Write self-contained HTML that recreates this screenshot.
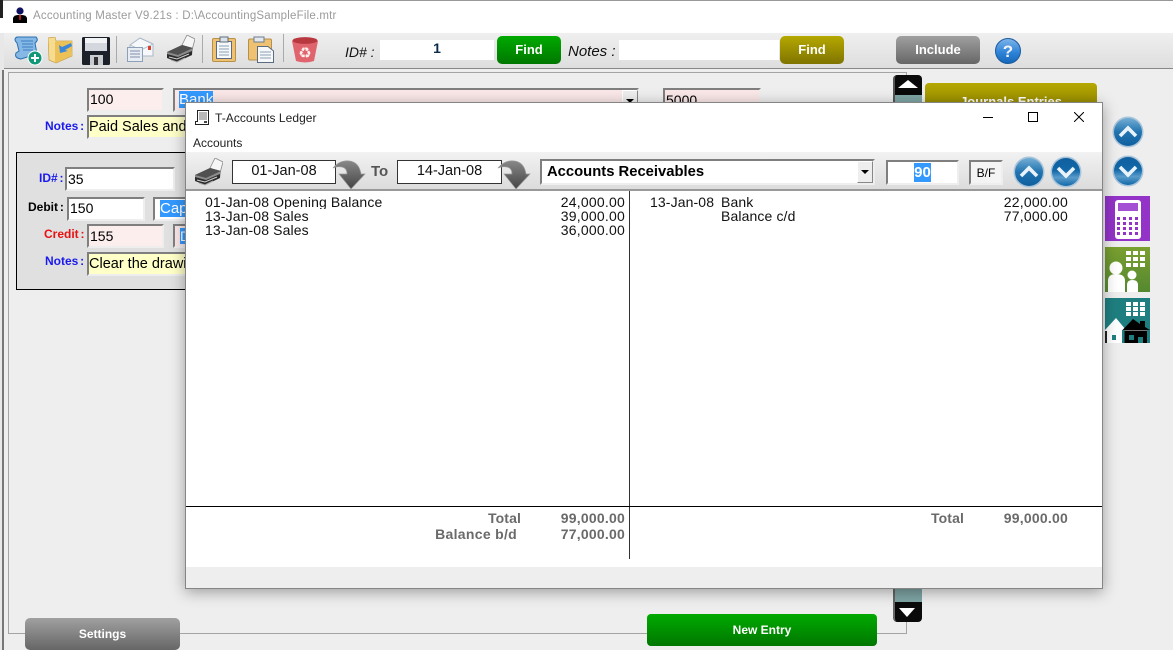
<!DOCTYPE html>
<html><head><meta charset="utf-8"><style>
*{box-sizing:border-box}
html,body{margin:0;padding:0;width:1173px;height:650px;overflow:hidden;background:#eee;font-family:"Liberation Sans",sans-serif}
.a{position:absolute}
.t{position:absolute;white-space:nowrap}
.inp{position:absolute;border-style:solid;border-width:2px;border-color:#7f7f7f #eee #eee #7f7f7f;font-size:14px;line-height:20px;padding-left:1px;overflow:hidden;white-space:nowrap;color:#000}
.lb{position:absolute;font-size:12px;font-weight:bold;white-space:nowrap;line-height:14px;word-spacing:-1.5px}
.hl{background:#3399ff;color:#fff}
.btn{position:absolute;border-radius:5px;color:#fff;font-weight:bold;font-size:12px;text-align:center}
.g{background:linear-gradient(#00aa00,#007700)}
.o{background:linear-gradient(#b5a800,#7f7400)}
.k{background:linear-gradient(#a0a0a0,#666)}
.dd{position:absolute;width:16px;background:#eee;border:1px solid;border-color:#fff #888 #888 #fff}
.dd:after{content:"";position:absolute;left:3px;top:8px;border:4px solid transparent;border-top:4px solid #000;border-bottom:0}
.r{position:absolute;font-size:14px;line-height:14px;height:14px;overflow:hidden;white-space:nowrap;color:#111;letter-spacing:.12px}
.n{letter-spacing:.22px}
.b{font-weight:bold;color:#6a6a6a}
.ra{text-align:right}
</style></head><body>
<svg width="0" height="0" style="position:absolute"><defs>
<linearGradient id="ug" x1="0" y1="0" x2="0" y2="1"><stop offset="0" stop-color="#74aed4"/><stop offset=".5" stop-color="#2274b0"/><stop offset="1" stop-color="#0f5f9f"/></linearGradient>
<linearGradient id="dg" x1="0" y1="0" x2="0" y2="1"><stop offset="0" stop-color="#0f5f9f"/><stop offset=".45" stop-color="#1268a8"/><stop offset=".7" stop-color="#5a9ccb"/><stop offset="1" stop-color="#1268a8"/></linearGradient>
<linearGradient id="ag" x1="0" y1="0" x2="0" y2="1"><stop offset="0" stop-color="#888"/><stop offset="1" stop-color="#444"/></linearGradient>
<symbol id="pr" viewBox="0 0 30 28">
<path d="M17 10 22 0 30 4 27 15z" fill="#f6f6f6" stroke="#8a8a8a" stroke-width=".8"/>
<path d="M2 17 17 10 28 13 27 20 12 27 2 22z" fill="#8c8c8c"/>
<path d="M2 17 17 10 28 13 13 20z" fill="#505050"/>
<path d="M2 19 13 22 27 16 27 20 12 27 2 23z" fill="#2c2c2c"/>
<path d="M4 22 12 24 24 19" stroke="#d0d0d0" fill="none"/>
<path d="M6 25 12 27 20 23" stroke="#aaa" fill="none"/>
</symbol>
<symbol id="upc" viewBox="0 0 32 32">
<circle cx="16" cy="16" r="15.5" fill="#a8c4da"/><circle cx="16" cy="16" r="14" fill="url(#ug)"/>
<path d="M8 20 16 12 24 20" stroke="#eaf3f9" stroke-width="3.6" fill="none"/>
</symbol>
<symbol id="dnc" viewBox="0 0 32 32">
<circle cx="16" cy="16" r="15.5" fill="#a8c4da"/><circle cx="16" cy="16" r="14" fill="url(#dg)"/>
<path d="M8 12 16 20 24 12" stroke="#eaf3f9" stroke-width="3.6" fill="none"/>
</symbol>
<symbol id="arr" viewBox="0 0 34 30">
<path d="M1 8Q8 0 17 1 27 2 29 14L33 14 19 29 7 14 15 14Q15 8 10 7 5 6 1 8z" fill="url(#ag)" stroke="#999" stroke-width=".7"/>
</symbol>
</defs></svg>

<!-- title bar -->
<div class="a" style="left:0;top:0;width:1173px;height:33px;background:#fff;border-top:1px solid #999"></div>
<div class="a" style="left:0;top:0;width:3px;height:18px;background:#222"></div>
<svg class="a" style="left:13px;top:7px" width="14" height="17" viewBox="0 0 14 17"><circle cx="7" cy="4" r="3.6" fill="#101060"/><path d="M0 16V11Q1 8 5 8H9Q13 8 14 11V16z" fill="#000"/><path d="M6 8H8L7.7 13H6.3z" fill="#d02020"/></svg>
<div class="t" style="left:33px;top:9px;font-size:11.5px;line-height:14px;color:#9b9b9b;letter-spacing:.2px">Accounting Master V9.21s : D:\AccountingSampleFile.mtr</div>

<!-- main toolbar -->
<div class="a" style="left:0;top:33px;width:4px;height:617px;background:#e8e8e8"></div>
<div class="a" style="left:2px;top:70px;width:1.5px;height:580px;background:#777"></div>
<div class="a" style="left:4px;top:33px;width:1169px;height:36px;background:linear-gradient(#efefef,#dedede);border-bottom:1px solid #888"></div>

<!-- scroll icon -->
<svg class="a" style="left:14px;top:36px" width="29" height="30" viewBox="0 0 29 30"><path d="M3 1H22Q25 4 21 7L23 18 7 23Q0 22 2 17L5 15 3 7Q-1 3 3 1z" fill="#86b8e6" stroke="#2a70b0"/><path d="M7 5H19M8 8H19M8 11H19M9 14H19" stroke="#3a80c0"/><circle cx="21" cy="22" r="7" fill="#109878" stroke="#fff"/><path d="M21 18V26M17 22H25" stroke="#fff" stroke-width="2"/></svg>
<!-- folder -->
<svg class="a" style="left:48px;top:37px" width="25" height="27" viewBox="0 0 25 27"><path d="M0 1 7 0 8 4 24 4V19L8 26 1 23z" fill="#f6dc90" stroke="#c8a048" stroke-width=".7"/><path d="M7 5 24 4 23 19 7 26z" fill="#ecc258"/><path d="M23 6 14 10 11 8 12 16 20 14 17 13 24 9z" fill="#3b88d8"/></svg>
<!-- floppy -->
<svg class="a" style="left:82px;top:37px" width="28" height="28" viewBox="0 0 28 28"><rect width="28" height="28" rx="1.5" fill="#1c2028"/><rect x="3" y="1" width="22" height="13" fill="#d4d8de"/><rect x="3" y="1" width="22" height="5" fill="#f2f4f6"/><rect x="8" y="18" width="13" height="10" fill="#c8ccd0"/><rect x="12" y="20" width="4" height="8" fill="#333"/></svg>
<div class="a" style="left:116px;top:36px;width:1px;height:27px;background:#aaa"></div>
<!-- mail -->
<svg class="a" style="left:127px;top:37px" width="27" height="25" viewBox="0 0 27 25"><path d="M3 8 13 1 26 7V19H3z" fill="#f6f8fb" stroke="#a8b8c8"/><path d="M3 8 14 13 26 7" fill="none" stroke="#b8c4d0"/><rect x="21" y="9" width="3" height="4" fill="#d84030"/><rect x="0.5" y="10.5" width="15" height="14" fill="#e8edf4" stroke="#8ca0b8"/><path d="M3 14H13M3 17H13M3 20H13" stroke="#8090a8"/></svg>
<svg class="a" style="left:165px;top:35px" width="30" height="28"><use href="#pr"/></svg>
<div class="a" style="left:202px;top:35px;width:1px;height:28px;background:#aaa"></div>
<!-- clipboard -->
<svg class="a" style="left:212px;top:36px" width="24" height="26" viewBox="0 0 24 26"><rect x=".5" y="2.5" width="23" height="23" rx="1.5" fill="#eec272" stroke="#b89048"/><rect x="4.5" y="5.5" width="15" height="17" fill="#f6f8fa" stroke="#5c6c80"/><rect x="8" y="1" width="8" height="5" fill="#dde2e8" stroke="#5c6c80"/><path d="M7 10H17M7 13H17M7 16H17M7 19H17" stroke="#8ca0b8"/></svg>
<!-- paste -->
<svg class="a" style="left:248px;top:36px" width="27" height="27" viewBox="0 0 27 27"><rect x=".5" y="3" width="23" height="21" rx="1.5" fill="#eec272" stroke="#b89048"/><rect x="6" y="1" width="10" height="5" fill="#e4e8ec" stroke="#6c7c90"/><path d="M9.5 10.5H20L25.5 15V26.5H9.5z" fill="#f6f8fa" stroke="#5c6c80"/><path d="M12 16H23M12 19H23M12 22H23" stroke="#8ca0b8"/></svg>
<div class="a" style="left:283px;top:34px;width:1px;height:28px;background:#aaa"></div>
<!-- recycle -->
<svg class="a" style="left:291px;top:36px" width="28" height="28" viewBox="0 0 28 28"><path d="M1 5Q14-1 27 5L23 25Q14 28 5 25z" fill="#e0646e"/><ellipse cx="14" cy="4.5" rx="12.5" ry="3.4" fill="#b83840"/><text x="14" y="22" font-family="DejaVu Sans" font-size="15" text-anchor="middle" fill="#fdeeee">♻</text></svg>

<div class="t" style="left:345px;top:44px;font-size:14px;line-height:16px;font-style:italic;color:#111">ID# :</div>
<div class="a" style="left:380px;top:40px;width:114px;height:20px;background:#fff;text-align:center;font-size:14px;font-weight:bold;line-height:17px;color:#0a2a4a">1</div>
<div class="btn g" style="left:497px;top:36px;width:64px;height:28px;line-height:28px;font-size:13px">Find</div>
<div class="t" style="left:568px;top:44px;font-size:15px;line-height:16px;font-style:italic;color:#111">Notes :</div>
<div class="a" style="left:619px;top:40px;width:160px;height:20px;background:#fff"></div>
<div class="btn o" style="left:780px;top:36px;width:64px;height:28px;line-height:28px;font-size:13px">Find</div>
<div class="btn k" style="left:896px;top:36px;width:84px;height:28px;line-height:28px;font-size:13px">Include</div>
<svg class="a" style="left:995px;top:38px" width="26" height="26" viewBox="0 0 26 26"><defs><linearGradient id="hg" x1="0" y1="0" x2="0" y2="1"><stop offset="0" stop-color="#80b4ea"/><stop offset=".55" stop-color="#2f84d8"/><stop offset="1" stop-color="#1566b8"/></linearGradient></defs><circle cx="13" cy="13" r="12.5" fill="url(#hg)" stroke="#1a5a9c"/><text x="13" y="19" font-family="Liberation Sans" font-weight="bold" font-size="17" text-anchor="middle" fill="#f2f4fa">?</text></svg>

<!-- background panel -->
<div class="a" style="left:8px;top:72px;width:899px;height:562px;border:1px solid #a4a4a4;background:#eee"></div>

<div class="inp" style="left:87px;top:88px;width:77px;height:24px;background:#fdeeee;line-height:19px">100</div>
<div class="inp" style="left:173px;top:88px;width:466px;height:24px;background:#fbe8e8;padding-left:4px;font-size:15px"><span class="hl">Bank</span></div>
<div class="dd" style="left:622px;top:90px;height:20px"></div>
<div class="inp" style="left:663px;top:88px;width:98px;height:24px;background:#fbe8e8">5000</div>
<div class="lb" style="left:45px;top:119px;color:#1a1aee">Notes :</div>
<div class="inp" style="left:87px;top:115px;width:300px;height:24px;background:#ffffc8;font-size:14.5px;padding-left:0">Paid Sales and</div>

<div class="a" style="left:16px;top:152px;width:300px;height:138px;border:1px solid #000;background:#e0e0e0"></div>
<div class="lb" style="left:39px;top:171px;color:#1a1aee">ID# :</div>
<div class="inp" style="left:65px;top:167px;width:110px;height:24px;background:#fff">35</div>
<div class="lb" style="left:28px;top:200px;color:#000">Debit :</div>
<div class="inp" style="left:67px;top:197px;width:78px;height:24px;background:#fff;line-height:19px">150</div>
<div class="inp" style="left:153px;top:197px;width:100px;height:24px;background:#fff;padding-left:5px;font-size:15px"><span class="hl">Cap</span></div>
<div class="lb" style="left:44px;top:227px;color:#e81010">Credit :</div>
<div class="inp" style="left:87px;top:224px;width:77px;height:24px;background:#fdeeee">155</div>
<div class="inp" style="left:173px;top:224px;width:60px;height:24px;background:#fbe8e8;padding-left:5px"><span class="hl">D</span></div>
<div class="lb" style="left:45px;top:254px;color:#1a1aee">Notes :</div>
<div class="inp" style="left:87px;top:252px;width:200px;height:24px;background:#ffffc8;font-size:14.5px;padding-left:0">Clear the drawing</div>

<!-- scroll top -->
<div class="a" style="left:893px;top:75px;width:29px;height:30px;border-radius:4px 4px 0 0;background:linear-gradient(#0a0a0a 0,#0a0a0a 20px,#7fa5a5 20px);border-left:2px solid #555"></div>
<div class="a" style="left:898px;top:80px;border:10px solid transparent;border-bottom:8px solid #fff;border-top:0"></div>
<div class="btn o" style="left:925px;top:83px;width:172px;height:40px;line-height:37px;font-size:13px;border-radius:4px">Journals Entries</div>

<!-- scroll bottom -->
<div class="a" style="left:893px;top:585px;width:29px;height:37px;border-radius:0 0 4px 4px;background:linear-gradient(#7fa5a5 0,#7fa5a5 17px,#0a0a0a 17px);border-left:2px solid #666"></div>
<div class="a" style="left:899px;top:608px;border:8px solid transparent;border-top:9px solid #fff;border-bottom:0"></div>

<div class="btn k" style="left:25px;top:618px;width:155px;height:32px;line-height:32px">Settings</div>
<div class="btn g" style="left:647px;top:614px;width:230px;height:32px;line-height:32px;border-radius:4px">New Entry</div>

<!-- right icons -->
<svg class="a" style="left:1112px;top:116px" width="32" height="32"><use href="#upc"/></svg>
<svg class="a" style="left:1112px;top:155px" width="32" height="32"><use href="#dnc"/></svg>
<svg class="a" style="left:1105px;top:196px" width="45" height="45" viewBox="0 0 45 45"><rect width="45" height="45" fill="#9333c8"/><rect x="10" y="4" width="26" height="39" rx="3" fill="#fff"/><rect x="13" y="7" width="20" height="8" fill="#a450d4"/><g fill="#9333c8"><rect x="12" y="21" width="3" height="3"/><rect x="18" y="21" width="3" height="3"/><rect x="24" y="21" width="3" height="3"/><rect x="30" y="21" width="3" height="3"/><rect x="12" y="26" width="3" height="3"/><rect x="18" y="26" width="3" height="3"/><rect x="24" y="26" width="3" height="3"/><rect x="30" y="26" width="3" height="3"/><rect x="12" y="31" width="3" height="3"/><rect x="18" y="31" width="3" height="3"/><rect x="24" y="31" width="3" height="3"/><rect x="30" y="31" width="3" height="3"/><rect x="12" y="36" width="3" height="3"/><rect x="18" y="36" width="3" height="3"/><rect x="24" y="36" width="3" height="3"/><rect x="30" y="36" width="3" height="3"/></g></svg>
<svg class="a" style="left:1105px;top:247px" width="45" height="45" viewBox="0 0 45 45"><defs><linearGradient id="gg" x1="0" y1="0" x2="0" y2="1"><stop offset="0" stop-color="#7aa030"/><stop offset="1" stop-color="#558830"/></linearGradient></defs><rect width="45" height="45" fill="url(#gg)"/><g fill="#fff"><rect x="21" y="4" width="5" height="4"/><rect x="28" y="4" width="5" height="4"/><rect x="35" y="4" width="5" height="4"/><rect x="21" y="10" width="5" height="4"/><rect x="28" y="10" width="5" height="4"/><rect x="35" y="10" width="5" height="4"/><rect x="21" y="16" width="5" height="4"/><rect x="28" y="16" width="5" height="4"/><rect x="35" y="16" width="5" height="4"/><circle cx="11" cy="21" r="6.5"/><path d="M3 45V34Q3 27 11 27 20 27 20 34V45z"/><circle cx="27" cy="28" r="4.5"/><path d="M22 45V38Q22 33 27.500 33 33 33 33 38V45z"/></g></svg>
<svg class="a" style="left:1105px;top:298px" width="45" height="45" viewBox="0 0 45 45"><rect width="45" height="45" fill="#1f7f80"/><g fill="#fff"><rect x="21" y="4" width="5" height="4"/><rect x="28" y="4" width="5" height="4"/><rect x="35" y="4" width="5" height="4"/><rect x="21" y="9" width="5" height="4"/><rect x="28" y="9" width="5" height="4"/><rect x="35" y="9" width="5" height="4"/><rect x="21" y="14" width="5" height="4"/><rect x="28" y="14" width="5" height="4"/><rect x="35" y="14" width="5" height="4"/><path d="M0 32 11 20 21 32H17V45H0z"/></g><rect x="0" y="33" width="2" height="12" fill="#222"/><rect x="7" y="37" width="4" height="5" fill="#1f7f80"/><path d="M17.500 32 28 21 35 26V23H40V29L45 32H42V45H19.500V32z" fill="#000"/><rect x="19.500" y="32" width="22.500" height="1" fill="#777"/><rect x="24" y="37" width="5" height="5" fill="#1f7f80"/><rect x="33" y="39" width="5" height="6" fill="#1f7f80"/></svg>

<!-- dialog -->
<div class="a" style="left:185px;top:102px;width:918px;height:487px;background:#fff;border:1px solid #858585;box-shadow:0 3px 14px rgba(0,0,0,.35)"></div>
<svg class="a" style="left:195px;top:110px" width="14" height="15" viewBox="0 0 14 15"><path d="M2.500.5H13.500V14.500H.5V11.500H2.500z" fill="#fff" stroke="#222"/><path d="M4 3H12M4 5H12M4 7H12M4 9H12" stroke="#444" stroke-width=".8"/><rect x="9" y="11" width="3" height="2" fill="#444"/></svg>
<div class="t" style="left:215px;top:111px;font-size:12px;line-height:14px;color:#222;letter-spacing:.05px">T-Accounts Ledger</div>
<div class="a" style="left:983px;top:117px;width:10px;height:1px;background:#000"></div>
<div class="a" style="left:1028px;top:112px;width:10px;height:10px;border:1px solid #000"></div>
<svg class="a" style="left:1074px;top:112px" width="10" height="10"><path d="M0 0 10 10M10 0 0 10" stroke="#000" fill="none"/></svg>
<div class="t" style="left:193px;top:136px;font-size:12px;line-height:15px;color:#222">Accounts</div>

<div class="a" style="left:186px;top:152px;width:916px;height:39px;background:linear-gradient(#f2f2f2,#dcdcdc);border-bottom:2px solid #999"></div>
<svg class="a" style="left:193px;top:158px" width="30" height="28"><use href="#pr"/></svg>
<div class="a" style="left:232px;top:160px;width:104px;height:24px;background:#fff;border:1px solid #333;text-align:center;font-size:14.5px;line-height:21px;color:#111">01-Jan-08</div>
<svg class="a" style="left:332px;top:160px" width="34" height="30"><use href="#arr"/></svg>
<div class="t" style="left:371px;top:163px;font-size:15px;line-height:17px;font-weight:bold;color:#555">To</div>
<div class="a" style="left:397px;top:160px;width:105px;height:24px;background:#fff;border:1px solid #333;text-align:center;font-size:14.5px;line-height:21px;color:#111">14-Jan-08</div>
<svg class="a" style="left:497px;top:160px" width="34" height="30"><use href="#arr"/></svg>
<div class="inp" style="left:540px;top:159px;width:335px;height:26px;background:#fff;font-weight:bold;padding-left:5px;line-height:22px;font-size:14.8px">Accounts Receivables</div>
<div class="dd" style="left:857px;top:161px;height:22px"></div>
<div class="inp" style="left:886px;top:160px;width:73px;height:25px;background:#fff;text-align:center;font-weight:bold;padding:0;line-height:21px;font-size:15px"><span class="hl" style="padding:1px 0">90</span></div>
<div class="inp" style="left:969px;top:160px;width:34px;height:25px;background:#f4f4f4;text-align:center;padding:0;font-size:12px;line-height:22px">B/F</div>
<svg class="a" style="left:1013px;top:156px" width="32" height="32"><use href="#upc"/></svg>
<svg class="a" style="left:1050px;top:156px" width="32" height="32"><use href="#dnc"/></svg>

<!-- ledger -->
<div class="r" style="left:205px;top:195px;width:300px">01-Jan-08 Opening Balance</div>
<div class="r" style="left:205px;top:209px;width:300px">13-Jan-08 Sales</div>
<div class="r" style="left:205px;top:223px;width:300px">13-Jan-08 Sales</div>
<div class="r n ra" style="left:525px;top:195px;width:100px">24,000.00</div>
<div class="r n ra" style="left:525px;top:209px;width:100px">39,000.00</div>
<div class="r n ra" style="left:525px;top:223px;width:100px">36,000.00</div>
<div class="a" style="left:629px;top:191px;width:1px;height:368px;background:#333"></div>
<div class="r" style="left:650px;top:195px;width:70px">13-Jan-08</div>
<div class="r" style="left:721px;top:195px;width:100px">Bank</div>
<div class="r" style="left:721px;top:209px;width:100px">Balance c/d</div>
<div class="r n ra" style="left:968px;top:195px;width:100px">22,000.00</div>
<div class="r n ra" style="left:968px;top:209px;width:100px">77,000.00</div>
<div class="a" style="left:186px;top:506px;width:916px;height:1px;background:#000"></div>
<div class="r b ra" style="left:421px;top:511px;width:100px">Total</div>
<div class="r n b ra" style="left:525px;top:511px;width:100px">99,000.00</div>
<div class="r b ra" style="left:397px;top:527px;width:120px;letter-spacing:.3px">Balance b/d</div>
<div class="r n b ra" style="left:525px;top:527px;width:100px">77,000.00</div>
<div class="r b ra" style="left:864px;top:511px;width:100px">Total</div>
<div class="r n b ra" style="left:968px;top:511px;width:100px">99,000.00</div>
<div class="a" style="left:186px;top:567px;width:916px;height:21px;background:#eee"></div>
</body></html>
